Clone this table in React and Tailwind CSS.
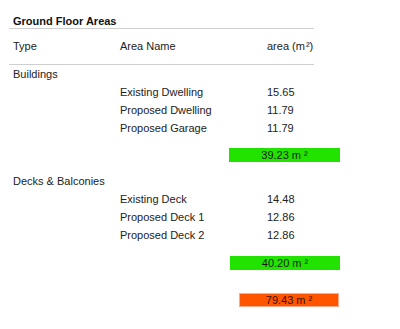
const buildings = [
  { name: 'Existing Dwelling', area: '15.65' },
  { name: 'Proposed Dwelling', area: '11.79' },
  { name: 'Proposed Garage', area: '11.79' },
];

const decks = [
  { name: 'Existing Deck', area: '14.48' },
  { name: 'Proposed Deck 1', area: '12.86' },
  { name: 'Proposed Deck 2', area: '12.86' },
];

function Row({ type, name, area }) {
  return (
    <div className="flex h-[18px] items-center">
      <div className="w-[111px] pl-[4px]">{type}</div>
      <div className="w-[147px]">{name}</div>
      <div>{area}</div>
    </div>
  );
}

function TotalBar({ value, className }) {
  return (
    <div className={`flex h-[14px] items-center justify-center text-[#1a1a1a] ${className}`}>
      {value} m<span className="ml-[3px]">²</span>
    </div>
  );
}

export default function App() {
  return (
    <div
      className="min-h-[329px] w-[400px] bg-white text-[11px] text-[#222]"
      style={{ fontFamily: '"Liberation Sans", Arial, sans-serif' }}
    >
      <div className="ml-[9px] w-[305px]">
        <div className="h-[29px] border-b border-[#cfcfcf] px-[4px] pt-[14px] font-bold leading-[14px] text-[#111]">
          Ground Floor Areas
        </div>
        <div className="flex h-[36px] items-center border-b border-[#cfcfcf]">
          <div className="w-[111px] pl-[4px]">Type</div>
          <div className="w-[147px]">Area Name</div>
          <div>
            area (m<span className="ml-[1px]">²</span>)
          </div>
        </div>
        <Row type="Buildings" />
        {buildings.map((b) => (
          <Row key={b.name} name={b.name} area={b.area} />
        ))}
      </div>

      <TotalBar value="39.23" className="ml-[229px] mt-[11px] w-[111px] bg-[#22e300]" />

      <div className="ml-[9px] mt-[10px] w-[305px]">
        <Row type="Decks & Balconies" />
        {decks.map((d) => (
          <Row key={d.name} name={d.name} area={d.area} />
        ))}
      </div>

      <TotalBar value="40.20" className="ml-[230px] mt-[12px] w-[110px] bg-[#22e300]" />

      <TotalBar
        value="79.43"
        className="ml-[239px] mt-[23px] w-[100px] border border-[#ffa98c] bg-[#ff5500] text-[#3a1200]"
      />
    </div>
  );
}
